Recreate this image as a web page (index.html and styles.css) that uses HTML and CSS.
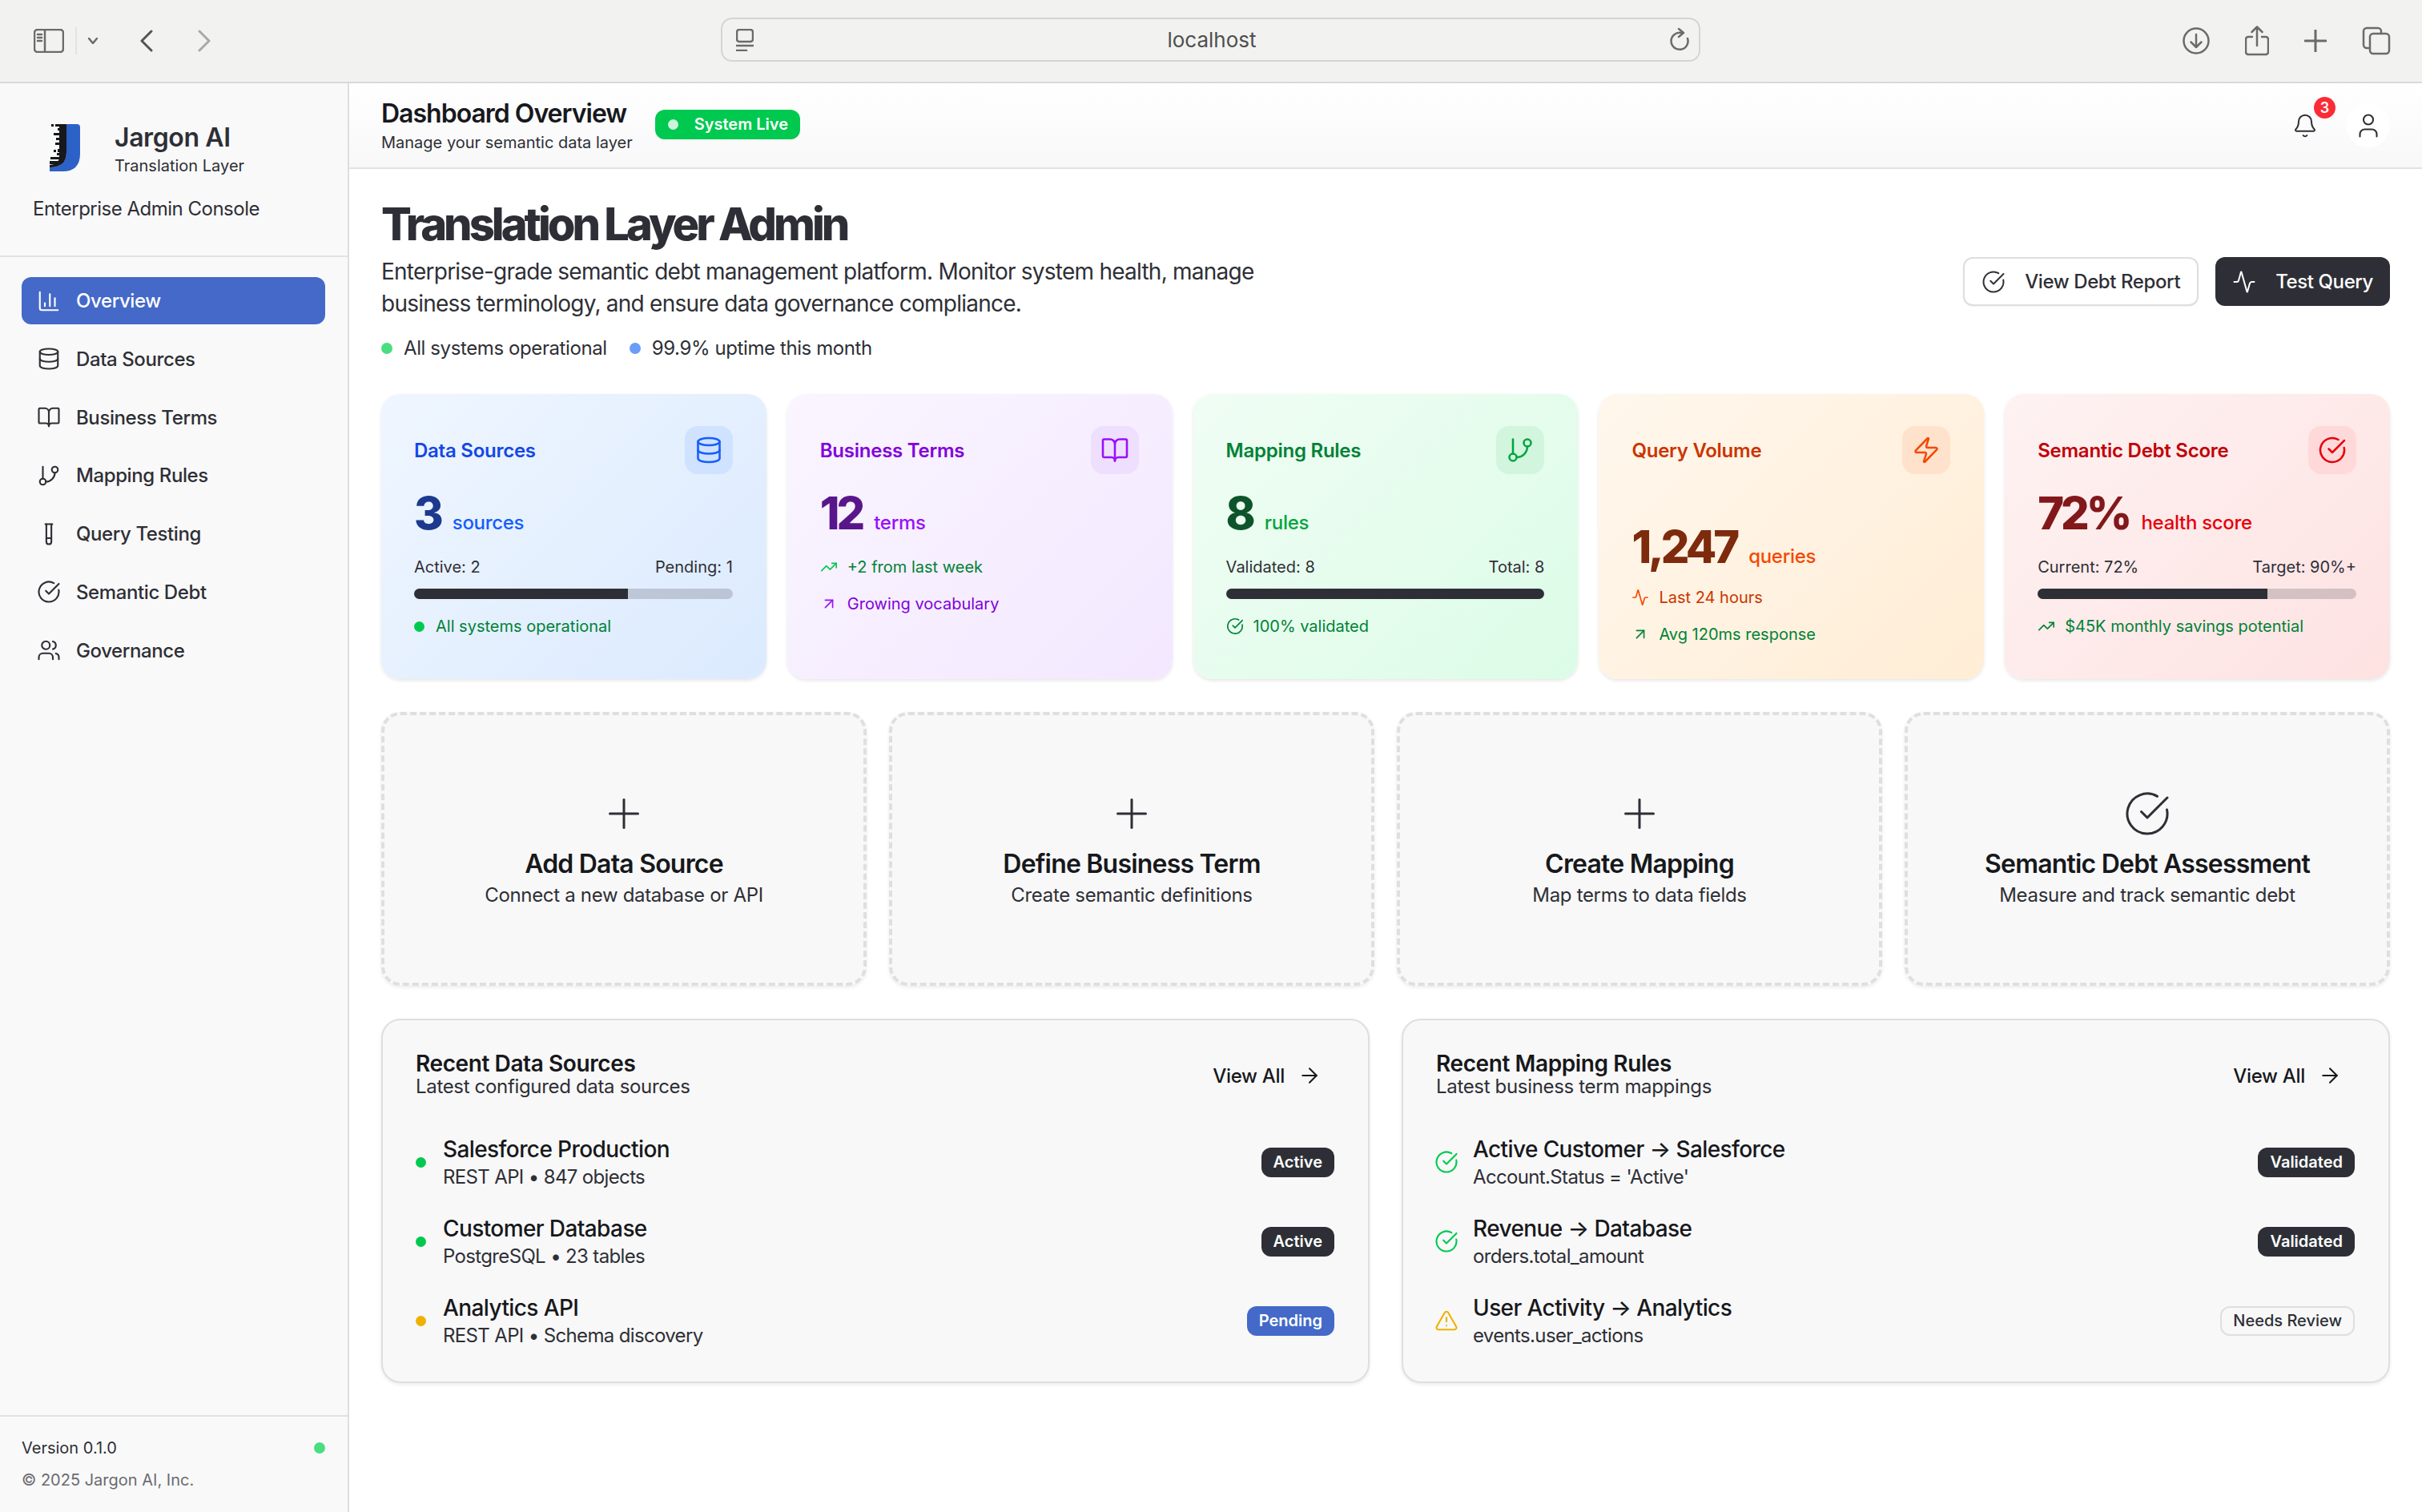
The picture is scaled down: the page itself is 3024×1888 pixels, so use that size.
FILE: index.html
```html
<!DOCTYPE html>
<html>
<head>
    <title>Jargon AI - Translation Layer Admin</title>
    <link rel="stylesheet" href="styles.css">
</head>
<body>
    <!-- icon set -->
    <svg class="icon-defs" xmlns="http://www.w3.org/2000/svg">
        <symbol id="i-chart" viewBox="0 0 24 24"><path d="M3 3v16a2 2 0 0 0 2 2h16"/><path d="M18 17V9"/><path d="M13 17V5"/><path d="M8 17v-3"/></symbol>
        <symbol id="i-db" viewBox="0 0 24 24"><ellipse cx="12" cy="5" rx="9" ry="3"/><path d="M3 5V19A9 3 0 0 0 21 19V5"/><path d="M3 12A9 3 0 0 0 21 12"/></symbol>
        <symbol id="i-book" viewBox="0 0 24 24"><path d="M12 7v14"/><path d="M3 18a1 1 0 0 1-1-1V4a1 1 0 0 1 1-1h5a4 4 0 0 1 4 4 4 4 0 0 1 4-4h5a1 1 0 0 1 1 1v13a1 1 0 0 1-1 1h-6a3 3 0 0 0-3 3 3 3 0 0 0-3-3z"/></symbol>
        <symbol id="i-branch" viewBox="0 0 24 24"><line x1="6" x2="6" y1="3" y2="15"/><circle cx="18" cy="6" r="3"/><circle cx="6" cy="18" r="3"/><path d="M18 9a9 9 0 0 1-9 9"/></symbol>
        <symbol id="i-tube" viewBox="0 0 24 24"><path d="M14.5 2v17.5c0 1.4-1.1 2.5-2.5 2.5s-2.5-1.1-2.5-2.5V2"/><path d="M8.5 2h7"/><path d="M14.5 16h-5"/></symbol>
        <symbol id="i-check" viewBox="0 0 24 24"><path d="M21.801 10A10 10 0 1 1 17 3.335"/><path d="m9 11 3 3L22 4"/></symbol>
        <symbol id="i-users" viewBox="0 0 24 24"><path d="M16 21v-2a4 4 0 0 0-4-4H6a4 4 0 0 0-4 4v2"/><circle cx="9" cy="7" r="4"/><path d="M22 21v-2a4 4 0 0 0-3-3.87"/><path d="M16 3.13a4 4 0 0 1 0 7.75"/></symbol>
        <symbol id="i-zap" viewBox="0 0 24 24"><path d="M4 14a1 1 0 0 1-.78-1.63l9.9-10.2a.5.5 0 0 1 .86.46l-1.92 6.02A1 1 0 0 0 13 10h7a1 1 0 0 1 .78 1.63l-9.9 10.2a.5.5 0 0 1-.86-.46l1.92-6.02A1 1 0 0 0 11 14z"/></symbol>
        <symbol id="i-trend" viewBox="0 0 24 24"><path d="M16 7h6v6"/><path d="m22 7-8.5 8.5-5-5L2 17"/></symbol>
        <symbol id="i-upright" viewBox="0 0 24 24"><path d="M7 7h10v10"/><path d="M7 17 17 7"/></symbol>
        <symbol id="i-activity" viewBox="0 0 24 24"><path d="M22 12h-2.48a2 2 0 0 0-1.93 1.46l-2.35 8.36a.25.25 0 0 1-.48 0L9.24 2.18a.25.25 0 0 0-.48 0l-2.35 8.36A2 2 0 0 1 4.49 12H2"/></symbol>
        <symbol id="i-plus" viewBox="0 0 24 24"><path d="M5 12h14"/><path d="M12 5v14"/></symbol>
        <symbol id="i-arrow" viewBox="0 0 24 24"><path d="M5 12h14"/><path d="m12 5 7 7-7 7"/></symbol>
        <symbol id="i-alert" viewBox="0 0 24 24"><path d="m21.73 18-8-14a2 2 0 0 0-3.48 0l-8 14A2 2 0 0 0 4 21h16a2 2 0 0 0 1.73-3"/><path d="M12 9v4"/><path d="M12 17h.01"/></symbol>
        <symbol id="i-bell" viewBox="0 0 24 24"><path d="M10.268 21a2 2 0 0 0 3.464 0"/><path d="M3.262 15.326A1 1 0 0 0 4 17h16a1 1 0 0 0 .74-1.673C19.41 13.956 18 12.499 18 8A6 6 0 0 0 6 8c0 4.499-1.411 5.956-2.738 7.326"/></symbol>
        <symbol id="i-user" viewBox="0 0 24 24"><path d="M19 21v-2a4 4 0 0 0-4-4H9a4 4 0 0 0-4 4v2"/><circle cx="12" cy="7" r="4"/></symbol>
    </svg>

    <div class="browser-bar">
        <div class="bar-left">
            <svg class="chrome-icon sidebar-toggle" viewBox="0 0 38 30"><rect x="1" y="1" width="36" height="28" rx="4"/><path d="M14 1v28"/><path d="M5 7h5M5 11h5M5 15h5"/></svg>
            <span class="bar-sep"></span>
            <svg class="chrome-icon bar-chevron" viewBox="0 0 12 8"><path d="M1 1l5 6 5-6"/></svg>
            <svg class="chrome-icon bar-back" viewBox="0 0 16 28"><path d="M14 2L2 14l12 12"/></svg>
            <svg class="chrome-icon bar-forward" viewBox="0 0 16 28"><path d="M2 2l12 12L2 26"/></svg>
        </div>
        <div class="url-bar">
            <svg class="chrome-icon url-page" viewBox="0 0 22 28"><rect x="1" y="1" width="20" height="15" rx="3"/><path d="M0 21h22M0 27h13"/></svg>
            <span class="url-text">localhost</span>
            <svg class="chrome-icon url-reload" viewBox="0 0 24 30"><path d="M14 6A10.500 10.500 0 1 0 22 13"/><path d="M11 1l6 5-6 5"/></svg>
        </div>
        <div class="bar-right">
            <svg class="chrome-icon bar-download" viewBox="0 0 34 34"><circle cx="17" cy="17" r="15.500"/><path d="M17 9v16M10.500 18.500L17 25l6.500-6.500"/></svg>
            <svg class="chrome-icon bar-share" viewBox="0 0 30 38"><path d="M9 14H4a3 3 0 0 0-3 3v16a3 3 0 0 0 3 3h22a3 3 0 0 0 3-3V17a3 3 0 0 0-3-3h-5"/><path d="M15 25V2M8.500 8L15 1.500 21.500 8"/></svg>
            <svg class="chrome-icon bar-plus" viewBox="0 0 28 28"><path d="M14 1v26M1 14h26"/></svg>
            <svg class="chrome-icon bar-tabs" viewBox="0 0 36 36"><path d="M8 27H6a4 4 0 0 1-4-4V6a4 4 0 0 1 4-4h14a4 4 0 0 1 4 4v2"/><rect x="10" y="9" width="24" height="25" rx="4"/></svg>
        </div>
    </div>

    <div class="app">
        <aside class="sidebar">
            <div class="side-head">
                <div class="brand">
                    <svg class="logo" viewBox="62 155 38 59">
                        <path class="logo-blue" d="M83 155h13q4 0 4 4v33q0 22-22 22H62v-5q21 0 21-20z"/>
                        <path class="logo-dark" d="M74 155h9v35q0 19-21 19v-3q10-1 12-8z"/>
                        <path class="logo-dark" d="M64 155h3v3h-3zM69 155h6v3h-6zM72 160h4v3h-4zM67 166h8v3h-8zM70 172h6v3h-6zM69 178h6v3h-6zM67 187h3v3h-3zM72 186h4v4h-4zM71 191h4v3h-4zM63 196h12v3H63zM62 201h12v4H62z"/>
                    </svg>
                    <div class="brand-text">
                        <div class="brand-name">Jargon AI</div>
                        <div class="brand-sub">Translation Layer</div>
                    </div>
                </div>
                <div class="console-name">Enterprise Admin Console</div>
            </div>
            <nav class="side-nav">
                <a class="nav-item active"><svg class="icon nav-icon"><use href="#i-chart"/></svg>Overview</a>
                <a class="nav-item"><svg class="icon nav-icon"><use href="#i-db"/></svg>Data Sources</a>
                <a class="nav-item"><svg class="icon nav-icon"><use href="#i-book"/></svg>Business Terms</a>
                <a class="nav-item"><svg class="icon nav-icon"><use href="#i-branch"/></svg>Mapping Rules</a>
                <a class="nav-item"><svg class="icon nav-icon"><use href="#i-tube"/></svg>Query Testing</a>
                <a class="nav-item"><svg class="icon nav-icon"><use href="#i-check"/></svg>Semantic Debt</a>
                <a class="nav-item"><svg class="icon nav-icon"><use href="#i-users"/></svg>Governance</a>
            </nav>
            <div class="side-foot">
                <div class="version-row"><span>Version 0.1.0</span><span class="dot version-dot"></span></div>
                <div class="copyright">© 2025 Jargon AI, Inc.</div>
            </div>
        </aside>

        <main class="main">
            <header class="top-header">
                <div class="top-title">
                    <h2>Dashboard Overview</h2>
                    <p>Manage your semantic data layer</p>
                </div>
                <span class="live-badge"><span class="dot live-dot"></span>System Live</span>
                <div class="top-actions">
                    <div class="bell"><svg class="icon bell-icon"><use href="#i-bell"/></svg><span class="bell-count">3</span></div>
                    <div class="avatar"><svg class="icon avatar-icon"><use href="#i-user"/></svg></div>
                </div>
            </header>

            <div class="content">
                <section class="hero">
                    <div>
                        <h1>Translation Layer Admin</h1>
                        <p class="hero-text">Enterprise-grade semantic debt management platform. Monitor system health, manage business terminology, and ensure data governance compliance.</p>
                        <div class="hero-status">
                            <span class="status-item"><span class="dot dot-green"></span>All systems operational</span>
                            <span class="status-item"><span class="dot dot-blue"></span>99.9% uptime this month</span>
                        </div>
                    </div>
                    <div class="hero-buttons">
                        <button class="btn btn-light"><svg class="icon btn-icon"><use href="#i-check"/></svg>View Debt Report</button>
                        <button class="btn btn-dark"><svg class="icon btn-icon"><use href="#i-activity"/></svg>Test Query</button>
                    </div>
                </section>

                <section class="stat-grid">
                    <div class="stat-card card-blue">
                        <div class="stat-head"><span class="stat-title">Data Sources</span><span class="stat-badge"><svg class="icon stat-icon"><use href="#i-db"/></svg></span></div>
                        <div class="stat-value"><strong>3</strong><span>sources</span></div>
                        <div class="stat-row"><span>Active: 2</span><span>Pending: 1</span></div>
                        <div class="progress"><div class="progress-fill" style="width: 67%"></div></div>
                        <div class="stat-note note-ok"><span class="dot note-dot"></span>All systems operational</div>
                    </div>
                    <div class="stat-card card-purple">
                        <div class="stat-head"><span class="stat-title">Business Terms</span><span class="stat-badge"><svg class="icon stat-icon"><use href="#i-book"/></svg></span></div>
                        <div class="stat-value"><strong>12</strong><span>terms</span></div>
                        <div class="stat-line note-ok first-line"><svg class="icon line-icon icon-bright"><use href="#i-trend"/></svg>+2 from last week</div>
                        <div class="stat-line note-accent"><svg class="icon line-icon"><use href="#i-upright"/></svg>Growing vocabulary</div>
                    </div>
                    <div class="stat-card card-green">
                        <div class="stat-head"><span class="stat-title">Mapping Rules</span><span class="stat-badge"><svg class="icon stat-icon"><use href="#i-branch"/></svg></span></div>
                        <div class="stat-value"><strong>8</strong><span>rules</span></div>
                        <div class="stat-row"><span>Validated: 8</span><span>Total: 8</span></div>
                        <div class="progress"><div class="progress-fill" style="width: 100%"></div></div>
                        <div class="stat-note note-ok"><svg class="icon line-icon"><use href="#i-check"/></svg>100% validated</div>
                    </div>
                    <div class="stat-card card-orange">
                        <div class="stat-head"><span class="stat-title">Query Volume</span><span class="stat-badge"><svg class="icon stat-icon"><use href="#i-zap"/></svg></span></div>
                        <div class="stat-value value-low"><strong>1,247</strong><span>queries</span></div>
                        <div class="stat-line note-accent first-line"><svg class="icon line-icon icon-unit"><use href="#i-activity"/></svg>Last 24 hours</div>
                        <div class="stat-line note-ok"><svg class="icon line-icon"><use href="#i-upright"/></svg>Avg 120ms response</div>
                    </div>
                    <div class="stat-card card-red">
                        <div class="stat-head"><span class="stat-title">Semantic Debt Score</span><span class="stat-badge"><svg class="icon stat-icon"><use href="#i-check"/></svg></span></div>
                        <div class="stat-value"><strong>72%</strong><span>health score</span></div>
                        <div class="stat-row"><span>Current: 72%</span><span>Target: 90%+</span></div>
                        <div class="progress"><div class="progress-fill" style="width: 72%"></div></div>
                        <div class="stat-note note-ok"><svg class="icon line-icon"><use href="#i-trend"/></svg>$45K monthly savings potential</div>
                    </div>
                </section>

                <section class="action-grid">
                    <div class="action-card"><svg class="icon action-icon"><use href="#i-plus"/></svg><h3>Add Data Source</h3><p>Connect a new database or API</p></div>
                    <div class="action-card"><svg class="icon action-icon"><use href="#i-plus"/></svg><h3>Define Business Term</h3><p>Create semantic definitions</p></div>
                    <div class="action-card"><svg class="icon action-icon"><use href="#i-plus"/></svg><h3>Create Mapping</h3><p>Map terms to data fields</p></div>
                    <div class="action-card"><svg class="icon action-icon"><use href="#i-check"/></svg><h3>Semantic Debt Assessment</h3><p>Measure and track semantic debt</p></div>
                </section>

                <section class="panel-grid">
                    <div class="panel">
                        <div class="panel-head">
                            <div><h3>Recent Data Sources</h3><p>Latest configured data sources</p></div>
                            <a class="view-all">View All<svg class="icon view-icon"><use href="#i-arrow"/></svg></a>
                        </div>
                        <div class="list">
                            <div class="list-item">
                                <span class="dot list-dot dot-ok"></span>
                                <div class="list-text"><div class="list-title">Salesforce Production</div><div class="list-sub">REST API • 847 objects</div></div>
                                <span class="tag tag-dark">Active</span>
                            </div>
                            <div class="list-item">
                                <span class="dot list-dot dot-ok"></span>
                                <div class="list-text"><div class="list-title">Customer Database</div><div class="list-sub">PostgreSQL • 23 tables</div></div>
                                <span class="tag tag-dark">Active</span>
                            </div>
                            <div class="list-item">
                                <span class="dot list-dot dot-warn"></span>
                                <div class="list-text"><div class="list-title">Analytics API</div><div class="list-sub">REST API • Schema discovery</div></div>
                                <span class="tag tag-blue">Pending</span>
                            </div>
                        </div>
                    </div>
                    <div class="panel">
                        <div class="panel-head">
                            <div><h3>Recent Mapping Rules</h3><p>Latest business term mappings</p></div>
                            <a class="view-all">View All<svg class="icon view-icon"><use href="#i-arrow"/></svg></a>
                        </div>
                        <div class="list">
                            <div class="list-item">
                                <svg class="icon list-icon icon-ok"><use href="#i-check"/></svg>
                                <div class="list-text"><div class="list-title">Active Customer → Salesforce</div><div class="list-sub">Account.Status = 'Active'</div></div>
                                <span class="tag tag-dark">Validated</span>
                            </div>
                            <div class="list-item">
                                <svg class="icon list-icon icon-ok"><use href="#i-check"/></svg>
                                <div class="list-text"><div class="list-title">Revenue → Database</div><div class="list-sub">orders.total_amount</div></div>
                                <span class="tag tag-dark">Validated</span>
                            </div>
                            <div class="list-item">
                                <svg class="icon list-icon icon-warn"><use href="#i-alert"/></svg>
                                <div class="list-text"><div class="list-title">User Activity → Analytics</div><div class="list-sub">events.user_actions</div></div>
                                <span class="tag tag-outline">Needs Review</span>
                            </div>
                        </div>
                    </div>
                </section>
            </div>
        </main>
    </div>
</body>
</html>
```

FILE: styles.css
```css
* {
    box-sizing: border-box;
}

html, body {
    margin: 0;
    height: 100%;
}

body {
    font-family: Inter, "Noto Sans", sans-serif;
    color: #2e2f36;
    background-color: #fff;
    display: flex;
    flex-direction: column;
    overflow: hidden;
}

h1, h2, h3, p {
    margin: 0;
}

.icon-defs {
    width: 0;
    height: 0;
    position: absolute;
}

.icon {
    fill: none;
    stroke: currentColor;
    stroke-width: 2;
    stroke-linecap: round;
    stroke-linejoin: round;
    flex: none;
}

.dot {
    display: inline-block;
    border-radius: 50%;
    flex: none;
}

/* browser bar */
.browser-bar {
    height: 104px;
    flex: none;
    display: grid;
    grid-template-columns: 900px 1223px 1fr;
    align-items: center;
    background-color: #f2f2f0;
    border-bottom: 2px solid #d9d9d8;
}

.chrome-icon {
    fill: none;
    stroke: #6b6b6b;
    stroke-width: 2.5;
    stroke-linecap: round;
    stroke-linejoin: round;
    flex: none;
}

.bar-left {
    display: flex;
    align-items: center;
    padding-left: 42px;
}

.sidebar-toggle {
    width: 38px;
    height: 30px;
}

.bar-sep {
    width: 2px;
    height: 34px;
    margin-left: 14px;
    background-color: #e3e3e1;
}

.bar-chevron {
    width: 12px;
    height: 8px;
    margin-left: 14px;
}

.bar-back {
    width: 16px;
    height: 28px;
    margin-left: 53px;
    stroke: #555;
    stroke-width: 3;
}

.bar-forward {
    width: 16px;
    height: 28px;
    margin-left: 56px;
    stroke: #a8a8a8;
    stroke-width: 3;
}

.url-bar {
    height: 55px;
    margin-bottom: 3px;
    display: flex;
    align-items: center;
    justify-content: space-between;
    padding: 0 12px 0 17px;
    border: 2px solid #d5d5d3;
    border-radius: 14px;
}

.url-page {
    width: 22px;
    height: 28px;
    stroke-width: 2.5;
}

.url-text {
    font-size: 26px;
    color: #4f4f4f;
}

.url-reload {
    width: 24px;
    height: 30px;
}

.bar-right {
    display: flex;
    align-items: center;
    justify-content: flex-end;
    gap: 44px;
    padding-right: 39px;
}

.bar-download {
    width: 34px;
    height: 34px;
}

.bar-share {
    width: 30px;
    height: 38px;
}

.bar-plus {
    width: 28px;
    height: 28px;
    stroke-width: 3;
}

.bar-tabs {
    width: 36px;
    height: 36px;
}

.app {
    flex: 1;
    display: flex;
    min-height: 0;
}

/* sidebar */
.sidebar {
    width: 436px;
    flex: none;
    display: flex;
    flex-direction: column;
    background-color: #f9f9f9;
    border-right: 2px solid #dedede;
}

.side-head {
    padding: 48px 41px 42px;
    border-bottom: 2px solid #e2e2e2;
}

.brand {
    display: flex;
    align-items: center;
}

.logo {
    width: 38px;
    height: 59px;
    margin: 0 43px 6px 21px;
}

.logo-blue {
    fill: #2c62c8;
}

.logo-dark {
    fill: #17181c;
}

.brand-name {
    font-size: 32px;
    line-height: 40px;
    font-weight: 600;
    letter-spacing: -0.4px;
}

.brand-sub {
    font-size: 20px;
    line-height: 30px;
}

.console-name {
    margin-top: 23px;
    font-size: 24px;
    line-height: 32px;
    letter-spacing: -0.5px;
}

.side-nav {
    padding: 25px 28px 0 27px;
    display: flex;
    flex-direction: column;
    gap: 13.8px;
}

.nav-item {
    height: 59px;
    display: flex;
    align-items: center;
    gap: 19px;
    padding-left: 19px;
    font-size: 24px;
    font-weight: 500;
    letter-spacing: -0.4px;
    border-radius: 12px;
}

.nav-item.active {
    color: #fff;
    background-color: #4469c8;
}

.nav-icon {
    width: 30px;
    height: 30px;
    stroke-width: 1.7;
}

.side-foot {
    margin-top: auto;
    padding: 25px 28px 26px 27px;
    border-top: 2px solid #e2e2e2;
    font-size: 20px;
    line-height: 28px;
}

.version-row {
    display: flex;
    align-items: center;
    justify-content: space-between;
}

.version-dot {
    width: 14px;
    height: 14px;
    background-color: #4ade80;
}

.copyright {
    margin-top: 12px;
    color: #6b6b70;
}

/* header */
.main {
    flex: 1;
    min-width: 0;
    display: flex;
    flex-direction: column;
}

.top-header {
    height: 107px;
    flex: none;
    display: flex;
    align-items: center;
    padding: 0 40px;
    background: linear-gradient(180deg, #fff, #f8f8f8);
    border-bottom: 2px solid #e2e2e2;
}

.top-title h2 {
    font-size: 32px;
    line-height: 40px;
    font-weight: 600;
    letter-spacing: -1px;
    color: #17181c;
}

.top-title p {
    margin-top: 2px;
    font-size: 20px;
    line-height: 28px;
}

.live-badge {
    height: 37px;
    margin: 0 0 3px 28px;
    padding: 0 15px 0 16px;
    display: flex;
    align-items: center;
    gap: 20px;
    color: #fff;
    font-size: 20px;
    font-weight: 600;
    background-color: #00c950;
    border-radius: 12px;
}

.live-dot {
    width: 13px;
    height: 13px;
    background-color: rgba(255, 255, 255, 0.8);
}

.top-actions {
    margin-left: auto;
    display: flex;
    align-items: center;
    gap: 35px;
}

.bell {
    position: relative;
    width: 32px;
    height: 32px;
    color: #2e2f36;
}

.bell-icon {
    width: 32px;
    height: 32px;
    stroke-width: 1.5;
}

.bell-count {
    position: absolute;
    top: -20px;
    left: 27px;
    width: 27px;
    height: 27px;
    border-radius: 50%;
    background-color: #fb2c36;
    color: #fff;
    font-size: 18px;
    font-weight: 600;
    line-height: 27px;
    text-align: center;
}

.avatar {
    width: 55px;
    height: 55px;
    border-radius: 50%;
    background-color: #fff;
    display: flex;
    align-items: center;
    justify-content: center;
}

.avatar-icon {
    width: 36px;
    height: 36px;
    stroke-width: 1.4;
}

/* content */
.content {
    padding: 37px 40px 0;
}

.hero {
    display: flex;
    align-items: center;
    justify-content: space-between;
}

h1 {
    font-size: 56px;
    line-height: 64px;
    font-weight: 800;
    letter-spacing: -4px;
}

.hero-text {
    width: 1150px;
    margin-top: 7px;
    font-size: 28px;
    line-height: 40px;
    letter-spacing: -0.76px;
}

.hero-status {
    margin-top: 20px;
    display: flex;
    gap: 28px;
    font-size: 24px;
    line-height: 32px;
    letter-spacing: -0.4px;
}

.status-item {
    display: flex;
    align-items: center;
    gap: 14px;
}

.status-item .dot {
    width: 14px;
    height: 14px;
}

.dot-green {
    background-color: #4ade80;
}

.dot-blue {
    background-color: #6a9cf8;
}

.hero-buttons {
    margin-top: 4px;
    display: flex;
    gap: 21px;
}

.btn {
    height: 61px;
    display: flex;
    align-items: center;
    gap: 24px;
    padding: 0 21px;
    font-family: inherit;
    font-size: 24px;
    font-weight: 500;
    letter-spacing: -0.4px;
    border-radius: 12px;
}

.btn-light {
    color: #2e2f36;
    background-color: #fff;
    border: 2px solid #dedede;
    box-shadow: 0 1px 2px rgba(0, 0, 0, 0.05);
}

.btn-dark {
    color: #fff;
    background-color: #2e2f36;
    border: none;
}

.btn-icon {
    width: 30px;
    height: 30px;
    stroke-width: 1.6;
}

/* stat cards */
.stat-grid {
    margin-top: 41px;
    display: grid;
    grid-template-columns: repeat(5, 1fr);
    gap: 26px;
}

.stat-card {
    height: 356px;
    padding: 40px 42px 40px 41px;
    border-radius: 24px;
    box-shadow: 0 2px 4px rgba(0, 0, 0, 0.1);
    font-size: 20px;
}

.card-blue {
    background: linear-gradient(135deg, #eff6ff, #dbeafe);
    --title: #1447e6;
    --unit: #155dfc;
    --value: #1c398e;
    --badge: #cfe2ff;
}

.card-purple {
    background: linear-gradient(135deg, #faf5ff, #f3e8ff);
    --title: #8200db;
    --unit: #9810fa;
    --value: #59168b;
    --badge: #eedffe;
}

.card-green {
    background: linear-gradient(135deg, #f0fdf4, #dcfce7);
    --title: #008236;
    --unit: #00a63e;
    --value: #0d542b;
    --badge: #d2f5de;
}

.card-orange {
    background: linear-gradient(135deg, #fff7ed, #ffedd5);
    --title: #ca3500;
    --unit: #f54900;
    --value: #7e2a0c;
    --badge: #ffe2cc;
}

.card-red {
    background: linear-gradient(135deg, #fef2f2, #fee2e2);
    --title: #c10007;
    --unit: #e7000b;
    --value: #82181a;
    --badge: #ffd9da;
}

.stat-head {
    height: 60px;
    display: flex;
    align-items: center;
    justify-content: space-between;
}

.stat-title {
    font-size: 24px;
    font-weight: 600;
    letter-spacing: -0.25px;
    color: var(--title);
}

.stat-badge {
    width: 60px;
    height: 60px;
    display: flex;
    align-items: center;
    justify-content: center;
    border-radius: 16px;
    background-color: var(--badge);
    color: var(--unit);
}

.stat-icon {
    width: 36px;
    height: 36px;
    stroke-width: 1.7;
}

.stat-value {
    margin-top: 21px;
    display: flex;
    align-items: baseline;
    gap: 15px;
    line-height: 56px;
}

.stat-value strong {
    font-size: 56px;
    font-weight: 800;
    letter-spacing: -4px;
    color: var(--value);
}

.stat-value span {
    font-size: 24px;
    font-weight: 500;
    letter-spacing: -0.3px;
    color: var(--unit);
}

.value-low {
    margin-top: 63px;
}

.stat-row {
    margin-top: 13px;
    display: flex;
    justify-content: space-between;
    line-height: 28px;
}

.progress {
    height: 13px;
    margin-top: 13px;
    border-radius: 7px;
    overflow: hidden;
    background-color: rgba(46, 47, 54, 0.2);
}

.progress-fill {
    height: 100%;
    background-color: #2e2f36;
}

.stat-note {
    margin-top: 20px;
    display: flex;
    align-items: center;
    gap: 12px;
    line-height: 28px;
}

.stat-line {
    margin-top: 18px;
    display: flex;
    align-items: center;
    gap: 12px;
    line-height: 28px;
}

.first-line {
    margin-top: 13px;
}

.value-low + .first-line {
    margin-top: 9px;
}

.note-ok {
    color: #008236;
}

.note-accent {
    color: var(--title);
}

.note-accent .line-icon {
    color: var(--unit);
}

.note-dot {
    width: 13px;
    height: 13px;
    margin-right: 2px;
    background-color: #00c950;
}

.line-icon {
    width: 22px;
    height: 22px;
    stroke-width: 1.8;
}

.icon-bright {
    color: #00c950;
}

/* quick actions */
.action-grid {
    margin-top: 41px;
    display: grid;
    grid-template-columns: repeat(4, 1fr);
    gap: 28px;
}

.action-card {
    height: 342px;
    display: flex;
    flex-direction: column;
    align-items: center;
    justify-content: center;
    text-align: center;
    background-color: #f8f8f8;
    border: 4px dashed #dfdfdf;
    border-radius: 24px;
    box-shadow: 0 2px 4px rgba(0, 0, 0, 0.08);
}

.action-icon {
    width: 60px;
    height: 60px;
    stroke-width: 1.2;
}

.action-card h3 {
    margin-top: 13px;
    font-size: 32px;
    line-height: 40px;
    font-weight: 600;
    letter-spacing: -0.8px;
    color: #17181c;
}

.action-card p {
    margin-top: 3px;
    font-size: 24px;
    line-height: 32px;
    letter-spacing: -0.32px;
}

/* recent panels */
.panel-grid {
    margin-top: 41px;
    display: grid;
    grid-template-columns: repeat(2, 1fr);
    gap: 40px;
}

.panel {
    height: 455px;
    padding: 38px 42px 0 41px;
    background-color: #f8f8f8;
    border: 2px solid #dfdfdf;
    border-radius: 24px;
    box-shadow: 0 2px 4px rgba(0, 0, 0, 0.08);
}

.panel-head {
    display: flex;
    align-items: center;
    justify-content: space-between;
}

.panel-head h3 {
    font-size: 28px;
    line-height: 32px;
    font-weight: 600;
    letter-spacing: -0.4px;
    color: #17181c;
}

.panel-head p {
    font-size: 24px;
    line-height: 26px;
    letter-spacing: -0.33px;
}

.view-all {
    display: flex;
    align-items: center;
    gap: 16px;
    margin: 4px 16px 0 0;
    font-size: 24px;
    font-weight: 500;
    letter-spacing: -0.3px;
    color: #17181c;
}

.view-icon {
    width: 30px;
    height: 30px;
    stroke-width: 1.6;
}

.list {
    margin-top: 47px;
    display: flex;
    flex-direction: column;
    gap: 31px;
}

.list-item {
    display: flex;
    align-items: center;
}

.list-dot {
    width: 13px;
    height: 13px;
    margin-right: 21px;
}

.dot-ok {
    background-color: #00c950;
}

.dot-warn {
    background-color: #f0b100;
}

.list-icon {
    width: 30px;
    height: 30px;
    margin: 0 18px 0 -2px;
    stroke-width: 1.7;
}

.icon-ok {
    color: #00c950;
}

.icon-warn {
    color: #f0b100;
}

.list-text {
    flex: 1;
}

.list-title {
    font-size: 28px;
    line-height: 36px;
    font-weight: 500;
    letter-spacing: -0.6px;
    color: #17181c;
}

.list-sub {
    margin-top: 2px;
    font-size: 24px;
    line-height: 30px;
    letter-spacing: -0.65px;
}

.tag {
    height: 37px;
    padding: 0 15px;
    display: flex;
    align-items: center;
    font-size: 20px;
    font-weight: 600;
    border-radius: 12px;
}

.tag-dark {
    color: #fff;
    background-color: #2e2f36;
}

.tag-blue {
    color: #fff;
    background-color: #4469c8;
}

.tag-outline {
    padding: 0 14px;
    font-weight: 500;
    border: 2px solid #dfdfdf;
}
```
